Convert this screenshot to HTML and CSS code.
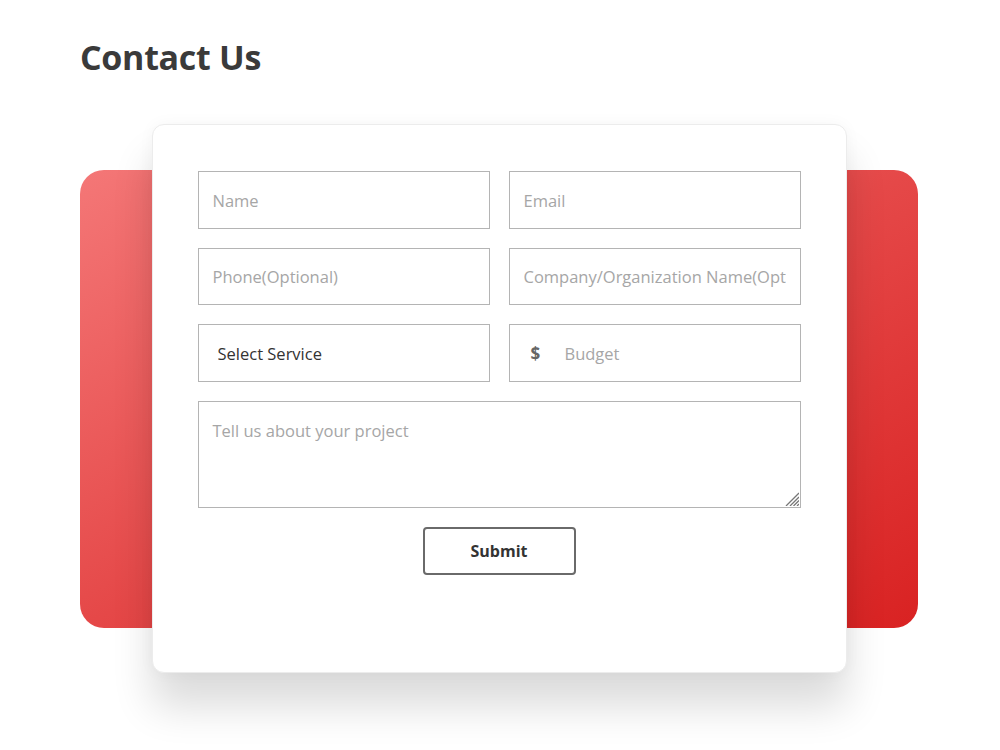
FILE: index.html
```html
<!DOCTYPE html>
<html lang="en">
<head>
    <meta charset="UTF-8">
    <meta name="viewport" content="width=device-width, initial-scale=1.0">
    <title>Contact Us</title>
    <link rel="stylesheet" href="styles.css">
</head>
<body>
    <div class="page">
        <h1 class="title">Contact Us</h1>

        <div class="stage">
            <div class="backdrop"></div>

            <form class="card" onsubmit="return false">
                <div class="fields">
                    <input type="text" placeholder="Name">
                    <input type="email" placeholder="Email">
                    <input type="tel" placeholder="Phone(Optional)">
                    <input type="text" placeholder="Company/Organization Name(Optional)">
                    <select class="service">
                        <option>Select Service</option>
                        <option>Web Design</option>
                        <option>Development</option>
                        <option>Marketing</option>
                    </select>
                    <div class="budget">
                        <span class="currency">$</span>
                        <input type="text" placeholder="Budget">
                    </div>
                    <div class="message-wrap">
                        <textarea class="message" placeholder="Tell us about your project"></textarea>
                        <svg class="grip" width="16" height="16" viewBox="0 0 16 16">
                            <path d="M3 16L16 3M7 16L16 7M10.5 16L16 10.5M14 16L16 14" stroke="#777" stroke-width="1.3" fill="none"/>
                        </svg>
                    </div>
                </div>
                <button type="submit" class="submit">Submit</button>
            </form>
        </div>
    </div>
</body>
</html>
```

FILE: styles.css
```css
body {
    margin: 0;
    min-height: 100vh;
    font-family: "Open Sans", "Noto Sans", sans-serif;
    background-color: #ffffff;
    color: #333;
}
.page {
    padding: 0 80px 90px;
}
.title {
    margin: 37px 0 0;
    font-size: 34px;
    line-height: 41px;
    font-weight: 700;
    color: #3a3a3a;
    letter-spacing: -0.3px;
}
.stage {
    display: grid;
    width: 838px;
    margin-top: 46px;
}
.backdrop,
.card {
    grid-area: 1 / 1;
}
.backdrop {
    height: 458px;
    margin-top: 46px;
    border-radius: 24px;
    background: linear-gradient(to bottom right, #f47777, #e54848 50%, #d92222);
}
.card {
    justify-self: center;
    box-sizing: border-box;
    width: 695px;
    height: 549px;
    padding: 46px 45px 0;
    background-color: #fff;
    border: 1px solid #ececec;
    border-radius: 12px;
    box-shadow: 0 34px 40px rgba(0, 0, 0, 0.14), 0 0 16px rgba(0, 0, 0, 0.04);
    display: flex;
    flex-direction: column;
    align-items: center;
}
.fields {
    display: grid;
    grid-template-columns: 292px 292px;
    grid-template-rows: 58px 57px 58px 107px;
    column-gap: 19px;
    row-gap: 19px;
    width: 603px;
}
.fields input,
.fields select,
.fields textarea,
.budget {
    box-sizing: border-box;
    width: 100%;
    height: 100%;
    margin: 0;
    border: 1px solid #b4b4b4;
    border-radius: 0;
    background-color: #fff;
    font-family: inherit;
    font-size: 16.5px;
    color: #333;
    outline: none;
}
.fields input {
    padding: 0 14px;
}
.fields ::placeholder {
    color: #a6a6a6;
}
.service {
    appearance: none;
    padding: 0 19px;
    color: #2f2f2f;
}
.budget {
    display: flex;
    align-items: center;
    padding-left: 21px;
}
.budget .currency {
    flex: none;
    width: 34px;
    font-weight: 700;
    font-size: 17px;
    color: #666;
}
.budget input {
    border: none;
    padding: 0;
    height: 40px;
}
.message-wrap {
    grid-column: 1 / span 2;
    position: relative;
}
.message {
    display: block;
    padding: 17px 14px;
    resize: none;
}
/* hatched corner grip */
.grip {
    position: absolute;
    right: 2px;
    bottom: 2px;
    pointer-events: none;
}
.submit {
    margin-top: 19px;
    box-sizing: border-box;
    width: 153px;
    height: 48px;
    background-color: #fff;
    border: 2px solid #6a6a6a;
    border-radius: 4px;
    font-family: inherit;
    font-size: 16px;
    font-weight: 700;
    color: #333;
    cursor: pointer;
}
.submit:hover {
    background-color: #f6f6f6;
}
```
